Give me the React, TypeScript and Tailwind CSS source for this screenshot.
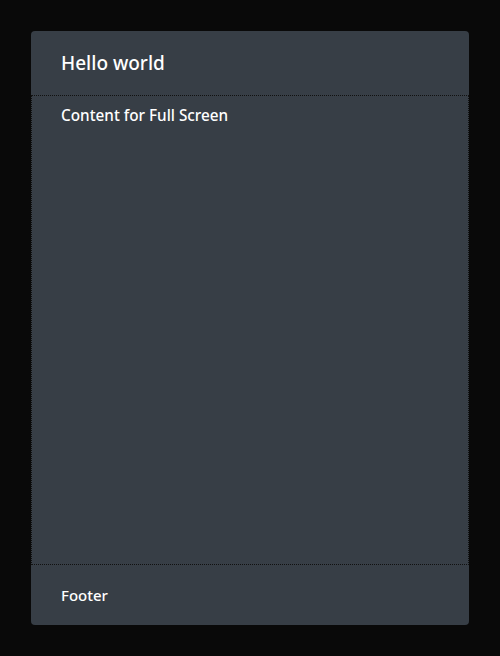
import React from "react";

export default function App() {
  return (
    <div
      className="w-[500px] h-[656px] bg-[#090909] p-[31px] flex"
      style={{ fontFamily: '"Noto Sans", "Open Sans", sans-serif' }}
    >
      <div className="flex-1 flex flex-col bg-[#373e46] rounded-[4px] overflow-hidden text-white font-medium">
        <div className="h-[64px] flex items-center px-[30px] shrink-0">
          <span className="text-[19px] leading-none">Hello world</span>
        </div>
        <div className="flex-1 border border-dotted border-[#111111] px-[29px] pt-[7px]">
          <span className="text-[15.3px] leading-[20px]">Content for Full Screen</span>
        </div>
        <div className="h-[60px] flex items-center px-[30px] shrink-0">
          <span className="text-[15px] leading-none">Footer</span>
        </div>
      </div>
    </div>
  );
}
